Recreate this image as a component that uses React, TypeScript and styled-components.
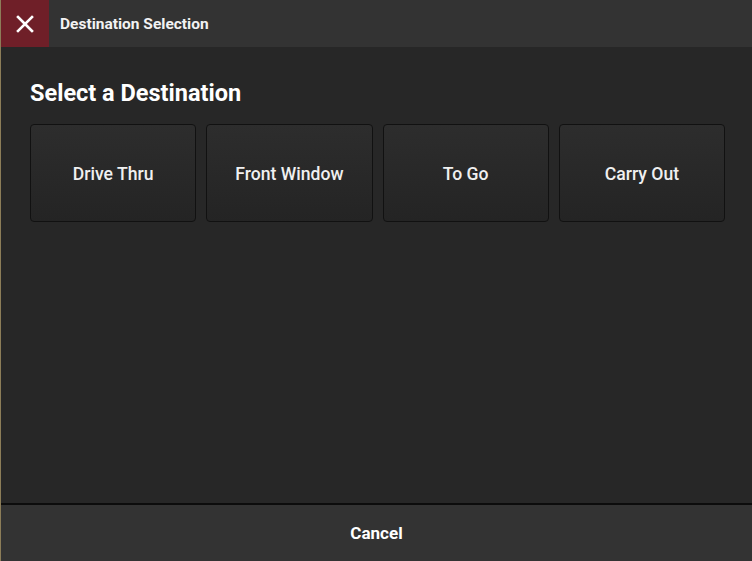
import React from "react";
import styled, { createGlobalStyle } from "styled-components";

const Global = createGlobalStyle`
  html, body { margin: 0; padding: 0; background: #272727; }
  body { font-family: Roboto, "Noto Sans", "Liberation Sans", sans-serif; }
  #root { height: 561px; }
`;

const Screen = styled.div`
  display: flex;
  flex-direction: column;
  width: 752px;
  height: 561px;
  box-sizing: border-box;
  border-left: 1px solid #8c7d58;
  background: #272727;
  color: #fff;
`;

const Header = styled.header`
  display: flex;
  align-items: center;
  height: 47px;
  background: #333333;
  flex-shrink: 0;
`;

const CloseButton = styled.button`
  display: flex;
  align-items: center;
  justify-content: center;
  width: 48px;
  height: 47px;
  padding: 0;
  border: none;
  background: #6f1f28;
  color: #fff;
  cursor: pointer;
`;

const HeaderTitle = styled.h1`
  margin: 0 0 0 11px;
  font-size: 15.5px;
  font-weight: 700;
  color: #f2f2f2;
`;

const Body = styled.main`
  flex: 1;
  padding: 32px 27px 0 29px;
`;

const Title = styled.h2`
  margin: 0 0 17px 0;
  font-size: 23.5px;
  font-weight: 700;
  line-height: 28px;
  color: #fff;
`;

const Grid = styled.div`
  display: grid;
  grid-template-columns: repeat(4, 1fr);
  gap: 10px;
`;

const Option = styled.button`
  height: 98px;
  padding-top: 2px;
  border: 1px solid #111;
  border-radius: 4px;
  background: linear-gradient(180deg, #2d2d2d 0%, #242424 100%);
  color: #f0f0f0;
  font-family: Roboto, "Noto Sans", "Liberation Sans", sans-serif;
  font-size: 17.6px;
  font-weight: 500;
  cursor: pointer;
`;

const Footer = styled.footer`
  display: flex;
  align-items: center;
  justify-content: center;
  height: 56px;
  border-top: 2px solid #0c0c0c;
  background: #333333;
  flex-shrink: 0;
`;

const CancelButton = styled.button`
  border: none;
  background: transparent;
  color: #fff;
  font-family: Roboto, "Noto Sans", "Liberation Sans", sans-serif;
  font-size: 17px;
  font-weight: 700;
  cursor: pointer;
`;

const destinations = ["Drive Thru", "Front Window", "To Go", "Carry Out"];

export default function App() {
  return (
    <>
      <Global />
      <Screen>
        <Header>
          <CloseButton aria-label="Close">
            <svg width="18" height="18" viewBox="0 0 18 18">
              <path d="M2 2 L16 16 M16 2 L2 16" stroke="#fff" strokeWidth="2.6" strokeLinecap="square" />
            </svg>
          </CloseButton>
          <HeaderTitle>Destination Selection</HeaderTitle>
        </Header>
        <Body>
          <Title>Select a Destination</Title>
          <Grid>
            {destinations.map((d) => (
              <Option key={d}>{d}</Option>
            ))}
          </Grid>
        </Body>
        <Footer>
          <CancelButton>Cancel</CancelButton>
        </Footer>
      </Screen>
    </>
  );
}
